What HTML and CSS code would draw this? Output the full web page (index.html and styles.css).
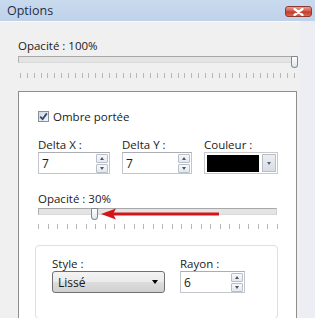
FILE: index.html
```html
<!DOCTYPE html>
<html lang="fr">
<head>
    <meta charset="UTF-8">
    <title>Options</title>
    <link rel="stylesheet" href="styles.css">
</head>
<body>
    <div class="window">
        <div class="titlebar">
            <span class="title">Options</span>
            <button class="close" aria-label="Fermer">
                <svg width="11" height="8" viewBox="0 0 11 8">
                    <path d="M1.5 1 L9.5 7 M9.5 1 L1.5 7" stroke="#fff" stroke-width="2.2" stroke-linecap="round"/>
                </svg>
            </button>
        </div>

        <div class="client">
            <div class="label first">Opacité : 100%</div>
            <div class="slider wide">
                <div class="track"></div>
                <div class="thumb" style="left: 273px"></div>
            </div>
            <div class="ticks wide"></div>

            <div class="panel">
                <label class="check">
                    <span class="box">
                        <svg width="9" height="9" viewBox="0 0 9 9">
                            <path d="M1.2 4.6 L3.6 7.2 L7.8 1.4" fill="none" stroke="#2b4a78" stroke-width="1.8"/>
                        </svg>
                    </span>
                    Ombre portée
                </label>

                <div class="fields">
                    <div class="field">
                        <div class="label">Delta X :</div>
                        <div class="spin w72">
                            <span class="value">7</span>
                            <span class="arrows"><i class="up"></i><i class="down"></i></span>
                        </div>
                    </div>
                    <div class="field">
                        <div class="label">Delta Y :</div>
                        <div class="spin w70">
                            <span class="value">7</span>
                            <span class="arrows"><i class="up"></i><i class="down"></i></span>
                        </div>
                    </div>
                    <div class="field">
                        <div class="label">Couleur :</div>
                        <div class="color">
                            <span class="swatch"></span>
                            <span class="drop"><i class="down"></i></span>
                        </div>
                    </div>
                </div>

                <div class="label second">Opacité : 30%</div>
                <div class="slider narrow">
                    <div class="track"></div>
                    <div class="thumb" style="left: 53px"></div>
                    <svg class="arrow" width="120" height="12" viewBox="0 0 120 12">
                        <path d="M12 6 H118" stroke="#d4141b" stroke-width="3"/>
                        <path d="M0 6 L15 0.5 L12 6 L15 11.5 Z" fill="#d4141b"/>
                    </svg>
                </div>
                <div class="ticks narrow"></div>

                <div class="group">
                    <div class="field">
                        <div class="label">Style :</div>
                        <div class="combo">
                            <span>Lissé</span>
                            <span class="caret"></span>
                        </div>
                    </div>
                    <div class="field">
                        <div class="label">Rayon :</div>
                        <div class="spin w65">
                            <span class="value">6</span>
                            <span class="arrows"><i class="up"></i><i class="down"></i></span>
                        </div>
                    </div>
                </div>
            </div>
        </div>
    </div>
</body>
</html>
```

FILE: styles.css
```css
* {
    margin: 0;
    padding: 0;
    box-sizing: border-box;
}

body {
    width: 315px;
    height: 318px;
    overflow: hidden;
    background: #eceef3;
    font-family: "Open Sans", "Noto Sans", sans-serif;
    font-size: 11.5px;
    color: #1a1a1a;
}

.titlebar {
    height: 21px;
    display: flex;
    align-items: center;
    justify-content: space-between;
    padding: 0 3px 0 7px;
    background: linear-gradient(#c9daee, #bfd2ea);
}

.title {
    font-size: 12.5px;
    color: #1e2f47;
    padding-bottom: 1px;
}

.close {
    width: 27px;
    height: 11px;
    margin-top: 2px;
    border: 1px solid #8d3a31;
    border-radius: 3px;
    background: linear-gradient(#e6a196 0%, #d6564a 45%, #c23a2c 55%, #d56a52 100%);
    display: flex;
    align-items: center;
    justify-content: center;
}

.client {
    width: 300px;
    height: 297px;
    background: #f0f0f0;
    border-top: 1px solid #fafafa;
    padding-left: 18px;
}

.label {
    line-height: 15px;
    white-space: nowrap;
}

.label.first {
    padding-top: 16px;
}

.label.second {
    margin-top: 17px;
}

.slider {
    position: relative;
    height: 13px;
}

.slider.wide {
    width: 279px;
    margin-top: 1px;
}

.slider.narrow {
    width: 239px;
    margin-top: -1px;
}

.track {
    margin-top: 3px;
    height: 7px;
    border: 1px solid #b6b6b6;
    border-color: #a8a8a8 #d2d2d2 #d9d9d9 #b0b0b0;
    background: #e4e4e4;
}

.thumb {
    position: absolute;
    top: 0;
    width: 7px;
    height: 12px;
    border: 1px solid #7f8a96;
    border-radius: 1px 1px 4px 4px;
    background: linear-gradient(#fdfdfd, #e2e6ea);
}

.arrow {
    position: absolute;
    left: 63px;
    top: 0;
}

.ticks {
    height: 5px;
    margin-top: 4px;
    background: repeating-linear-gradient(to right, #b7b7b7 0 1px, transparent 1px 6.85px);
}

.ticks.wide {
    width: 275px;
    margin-left: 2px;
}

.ticks.narrow {
    width: 240px;
    margin-top: 3px;
    background: repeating-linear-gradient(to right, #b7b7b7 0 1px, transparent 1px 9.56px);
}

.panel {
    margin-top: 13px;
    width: 279px;
    height: 240px;
    background: #fff;
    border: 1px solid #8e8e8e;
    padding: 16px 0 0 19px;
}

.check {
    display: flex;
    align-items: center;
    gap: 4px;
    height: 16px;
    font-size: 11.5px;
}

.box {
    width: 11px;
    height: 11px;
    border: 1px solid #8f8f8f;
    background: linear-gradient(135deg, #d3d9e2, #f4f6f8);
    display: flex;
    align-items: center;
    justify-content: center;
}

.fields {
    display: flex;
    gap: 12px;
    margin-top: 13px;
}

.spin {
    display: flex;
    align-items: center;
    justify-content: space-between;
    height: 22px;
    border: 1px solid #c2c6cc;
    border-top-color: #abadb3;
    padding: 0 1px 0 3px;
    background: #fff;
}

.w72 { width: 72px; }
.w70 { width: 70px; }
.w65 { width: 65px; }

.value {
    font-size: 12px;
}

.arrows {
    display: flex;
    flex-direction: column;
    gap: 1px;
}

.arrows i {
    width: 12px;
    height: 9px;
    border: 1px solid #b9bfc8;
    border-radius: 1px;
    background: linear-gradient(#f7f8fa, #e4e8ee);
    position: relative;
}

.arrows i::after,
.drop i::after {
    content: "";
    position: absolute;
    left: 3px;
    border-left: 2.5px solid transparent;
    border-right: 2.5px solid transparent;
}

.arrows .up::after {
    top: 2px;
    border-bottom: 3px solid #4d5663;
}

.arrows .down::after {
    top: 2px;
    border-top: 3px solid #4d5663;
}

.color {
    width: 74px;
    height: 22px;
    display: flex;
    align-items: center;
    gap: 3px;
    padding: 0 1px 0 2px;
    border: 1px solid #c9c9c9;
    background: #fff;
}

.swatch {
    width: 53px;
    height: 17px;
    background: #000;
}

.drop {
    width: 14px;
    height: 18px;
    border: 1px solid #b9bfc8;
    background: linear-gradient(#eceef1, #d9dde3);
    position: relative;
}

.drop i::after {
    top: 7px;
    left: 3.5px;
    border-top: 3px solid #5a6270;
}

.group {
    margin-top: 16px;
    margin-left: -3px;
    width: 243px;
    height: 74px;
    border: 1px solid #dcdfe3;
    border-radius: 4px;
    padding: 10px 0 0 16px;
    display: flex;
    gap: 15px;
}

.combo {
    width: 113px;
    height: 22px;
    border: 1px solid #707070;
    border-radius: 3px;
    background: linear-gradient(#f3f3f3 0%, #ebebeb 50%, #dddddd 51%, #cfcfcf 100%);
    display: flex;
    align-items: center;
    justify-content: space-between;
    padding: 0 6px 0 5px;
    font-size: 12px;
}

.caret {
    border-left: 3.5px solid transparent;
    border-right: 3.5px solid transparent;
    border-top: 4px solid #000;
}
```
